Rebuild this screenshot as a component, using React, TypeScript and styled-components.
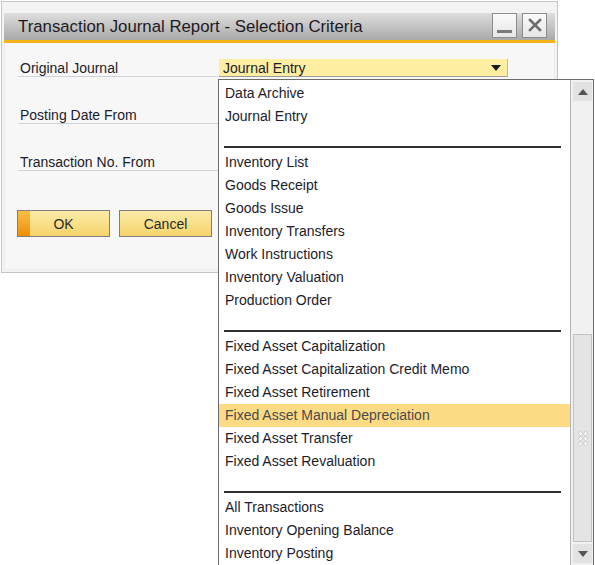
import React from 'react';
import styled, { createGlobalStyle } from 'styled-components';

const GlobalStyle = createGlobalStyle`
  body {
    margin: 0;
    background: #ffffff;
    font-family: 'Liberation Sans', Arial, sans-serif;
  }
`;

const Canvas = styled.div`
  position: relative;
  width: 595px;
  height: 565px;
  overflow: hidden;
  background: #ffffff;
`;

const Window = styled.div`
  margin: 1px 0 0 1px;
  width: 557px;
  height: 272px;
  box-sizing: border-box;
  border: 1px solid #c4c4c4;
  background: #f3f3f3;
  padding: 11px 2px 2px 2px;
  display: flex;
  flex-direction: column;
`;

const TitleBar = styled.div`
  height: 27px;
  border-bottom: 3px solid #f5b31a;
  background: linear-gradient(#dedede, #a9a9a9);
  display: flex;
  align-items: center;
  padding: 0 8px 0 14px;
`;

const Title = styled.div`
  flex: 1;
  font-size: 16.8px;
  color: #1e1a22;
  padding-top: 1px;
`;

const TitleButton = styled.div`
  width: 25px;
  height: 25px;
  margin-left: 5px;
  margin-top: -3px;
  box-sizing: border-box;
  border: 1px solid #8c8c8c;
  background: linear-gradient(#fafafa, #e6e6e6);
  display: flex;
  align-items: center;
  justify-content: center;
`;

const MinBar = styled.div`
  width: 15px;
  height: 3px;
  background: #7a7a7a;
  margin-top: 12px;
`;

const Body = styled.div`
  flex: 1;
  background: #f7f7f7;
  border: 1px solid #ececec;
  border-top: none;
  padding: 16px 0 0 13px;
  display: flex;
  flex-direction: column;
`;

const Rows = styled.div`
  display: flex;
  flex-direction: column;
  gap: 29px;
`;

const Row = styled.div`
  display: flex;
  height: 18px;
`;

const Label = styled.div`
  width: 198px;
  padding-left: 2px;
  border-bottom: 1px solid #ccd3da;
  font-size: 14px;
  color: #1c1c2a;
  line-height: 18px;
  white-space: nowrap;
`;

const Combo = styled.div`
  width: 289px;
  box-sizing: border-box;
  margin-left: 1px;
  background: #fdeea2;
  border-right: 1px solid #b9b9b9;
  border-bottom: 1px solid #9a9a9a;
  font-size: 14px;
  color: #1c1c2a;
  line-height: 18px;
  padding-left: 4px;
  display: flex;
  align-items: center;
  justify-content: space-between;
  padding-right: 6px;
`;

const Arrow = styled.div<{ $up?: boolean; $color?: string }>`
  width: 0;
  height: 0;
  border-left: 5px solid transparent;
  border-right: 5px solid transparent;
  ${(p) =>
    p.$up
      ? `border-bottom: 6px solid ${p.$color || '#1a1a1a'};`
      : `border-top: 6px solid ${p.$color || '#1a1a1a'};`}
`;

const Field = styled.div`
  width: 300px;
  border-left: 1px solid #a8a8a8;
  background: #ffffff;
`;

const Buttons = styled.div`
  display: flex;
  gap: 9px;
  margin-top: 39px;
  margin-left: -1px;
`;

const Button = styled.div<{ $default?: boolean }>`
  position: relative;
  width: 93px;
  height: 27px;
  box-sizing: border-box;
  border: 1px solid #7e7e7e;
  background: linear-gradient(#fbeaa8, #f5d46c);
  font-size: 14px;
  color: #2a2a2a;
  display: flex;
  align-items: center;
  justify-content: center;
  overflow: hidden;
  ${(p) =>
    p.$default &&
    `&::before {
      content: '';
      position: absolute;
      left: 0;
      top: 0;
      bottom: 0;
      width: 12px;
      background: linear-gradient(#f8bf45, #f08d0a);
    }`}
`;

const DropList = styled.div`
  position: absolute;
  left: 218px;
  top: 79px;
  width: 376px;
  height: 486px;
  box-sizing: border-box;
  border: 1px solid #6c6c6c;
  border-bottom: none;
  background: #ffffff;
  display: flex;
`;

const Items = styled.div`
  flex: 1;
  padding-top: 2px;
  display: flex;
  flex-direction: column;
`;

const Item = styled.div<{ $selected?: boolean }>`
  height: 23px;
  flex-shrink: 0;
  padding-left: 6px;
  font-size: 14px;
  line-height: 23px;
  color: ${(p) => (p.$selected ? '#4a4a4a' : '#1c1c2a')};
  background: ${(p) => (p.$selected ? '#fddb85' : 'transparent')};
  white-space: nowrap;
`;

const Separator = styled.div`
  height: 23px;
  flex-shrink: 0;
  display: flex;
  align-items: flex-end;
  padding: 0 9px 3px 5px;
  box-sizing: border-box;

  &::after {
    content: '';
    flex: 1;
    height: 2px;
    background: #2e2e2e;
  }
`;

const Scrollbar = styled.div`
  width: 23px;
  box-sizing: border-box;
  border-left: 1px solid #b4b4b4;
  background: #f1f1f1;
  display: flex;
  flex-direction: column;
  padding: 2px 1px 2px 2px;
`;

const ScrollButton = styled.div`
  height: 19px;
  background: #e2e2e2;
  display: flex;
  align-items: center;
  justify-content: center;
`;

const Track = styled.div`
  flex: 1;
  display: flex;
  flex-direction: column;
  justify-content: flex-end;
  padding-bottom: 2px;
`;

const Thumb = styled.div`
  height: 208px;
  box-sizing: border-box;
  border: 1px solid #c2c2c2;
  background: #e4e4e4;
  display: flex;
  align-items: center;
  justify-content: center;
`;

const Grip = styled.div`
  display: grid;
  grid-template-columns: repeat(2, 3px);
  gap: 2px 2px;

  span {
    width: 3px;
    height: 3px;
    border-radius: 50%;
    background: #fbfbfb;
    box-shadow: 0 0 0 0.5px #b8b8b8;
  }
`;

type Entry = { label?: string; selected?: boolean };

const entries: Entry[] = [
  { label: 'Data Archive' },
  { label: 'Journal Entry' },
  {},
  { label: 'Inventory List' },
  { label: 'Goods Receipt' },
  { label: 'Goods Issue' },
  { label: 'Inventory Transfers' },
  { label: 'Work Instructions' },
  { label: 'Inventory Valuation' },
  { label: 'Production Order' },
  {},
  { label: 'Fixed Asset Capitalization' },
  { label: 'Fixed Asset Capitalization Credit Memo' },
  { label: 'Fixed Asset Retirement' },
  { label: 'Fixed Asset Manual Depreciation', selected: true },
  { label: 'Fixed Asset Transfer' },
  { label: 'Fixed Asset Revaluation' },
  {},
  { label: 'All Transactions' },
  { label: 'Inventory Opening Balance' },
  { label: 'Inventory Posting' },
];

const CloseIcon = () => (
  <svg width="14" height="14" viewBox="0 0 14 14">
    <path d="M2 2 L12 12 M12 2 L2 12" stroke="#6e6e6e" strokeWidth="2.6" strokeLinecap="square" />
  </svg>
);

const App: React.FC = () => {
  return (
    <>
      <GlobalStyle />
      <Canvas>
        <Window>
          <TitleBar>
            <Title>Transaction Journal Report - Selection Criteria</Title>
            <TitleButton>
              <MinBar />
            </TitleButton>
            <TitleButton>
              <CloseIcon />
            </TitleButton>
          </TitleBar>
          <Body>
            <Rows>
              <Row>
                <Label>Original Journal</Label>
                <Combo>
                  Journal Entry
                  <Arrow />
                </Combo>
              </Row>
              <Row>
                <Label>Posting Date From</Label>
                <Field />
              </Row>
              <Row>
                <Label>Transaction No. From</Label>
                <Field />
              </Row>
            </Rows>
            <Buttons>
              <Button $default>OK</Button>
              <Button>Cancel</Button>
            </Buttons>
          </Body>
        </Window>

        <DropList>
          <Items>
            {entries.map((e, i) =>
              e.label ? (
                <Item key={i} $selected={e.selected}>
                  {e.label}
                </Item>
              ) : (
                <Separator key={i} />
              )
            )}
          </Items>
          <Scrollbar>
            <ScrollButton>
              <Arrow $up $color="#555555" />
            </ScrollButton>
            <Track>
              <Thumb>
                <Grip>
                  {Array.from({ length: 6 }).map((_, i) => (
                    <span key={i} />
                  ))}
                </Grip>
              </Thumb>
            </Track>
            <ScrollButton>
              <Arrow $color="#555555" />
            </ScrollButton>
          </Scrollbar>
        </DropList>
      </Canvas>
    </>
  );
};

export default App;
